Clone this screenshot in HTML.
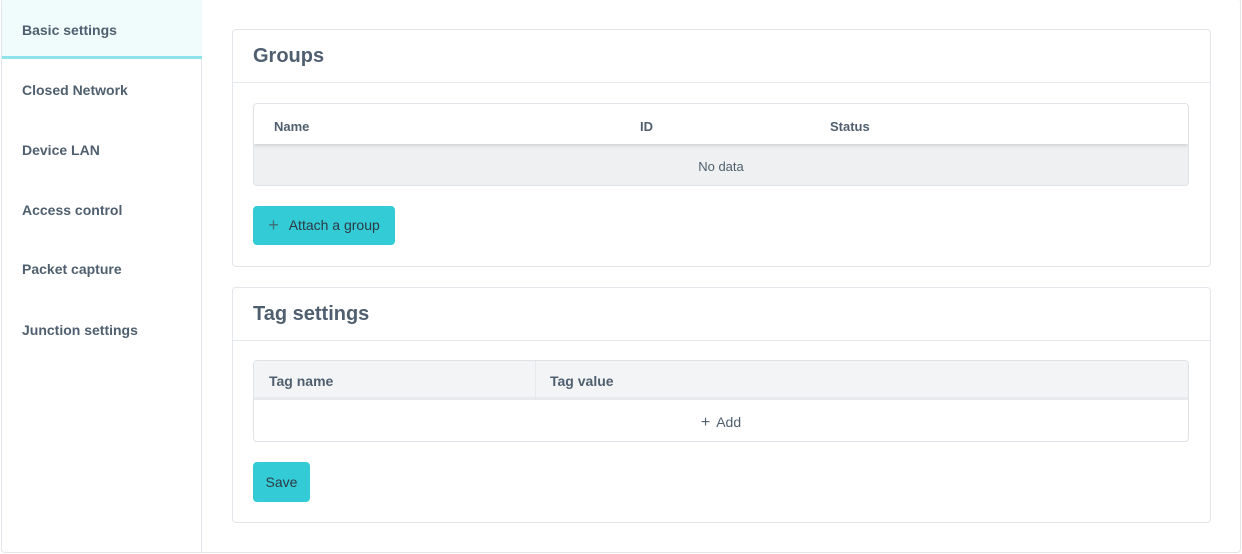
<!DOCTYPE html>
<html><head><style>
*{box-sizing:border-box;margin:0;padding:0}
body{width:1242px;height:554px;background:#fff;font-family:"Liberation Sans",sans-serif;color:#4f5f6f;position:relative;overflow:hidden}
.frame{position:absolute;left:1px;top:-2px;width:1240px;height:555px;border:1px solid #e3e6ea;border-radius:4px}
.side{position:absolute;left:1px;top:0;width:201px;height:553px;border-right:1px solid #e3e6ea}
.it{position:absolute;left:21px;font-size:14px;font-weight:bold;color:#4f5f6f}
.act{position:absolute;left:1px;top:0;width:200px;height:59px;background:#f0fbfc;border-bottom:3px solid #8ee4ea}
.card{position:absolute;left:232px;width:979px;border:1px solid #e3e6ea;border-radius:4px;background:#fff}
.card h2{font-size:20px;font-weight:bold;height:53px;line-height:53px;padding-left:20px;border-bottom:1px solid #e6e9ec;color:#4f5f6f}
.tbl{position:absolute;left:20px;width:936px;border:1px solid #dfe3e8;border-radius:4px;overflow:hidden}
.btn{position:absolute;left:20px;background:#33ccd6;border-radius:4px;color:#2d3a45;font-size:14px;text-align:center}
.th{position:absolute;font-size:13px;font-weight:bold;color:#4f5f6f}
</style></head><body>
<div class="frame"></div>
<div class="side">
<div class="act"></div>
<div class="it" style="top:22px">Basic settings</div>
<div class="it" style="top:82px">Closed Network</div>
<div class="it" style="top:142px">Device LAN</div>
<div class="it" style="top:202px">Access control</div>
<div class="it" style="top:261px">Packet capture</div>
<div class="it" style="top:322px">Junction settings</div>
</div>
<div class="card" style="top:29px;height:238px">
<h2>Groups</h2>
<div class="tbl" style="top:73px;height:83px;background:#eff0f2">
<div style="position:absolute;left:0;top:0;width:100%;height:40px;background:#fff;box-shadow:0 2px 3px rgba(0,0,0,.12)"></div>
<div class="th" style="left:20px;top:15px">Name</div>
<div class="th" style="left:386px;top:15px">ID</div>
<div class="th" style="left:576px;top:15px">Status</div>
<div style="position:absolute;left:0;width:100%;top:55px;text-align:center;font-size:13px;color:#4f5f6f">No data</div>
</div>
<div class="btn" style="top:176px;width:142px;height:39px;line-height:39px"><span style="color:#3d6d75;font-size:18px;margin-right:10px;vertical-align:-1px">+</span>Attach a group</div>
</div>
<div class="card" style="top:287px;height:236px">
<h2>Tag settings</h2>
<div class="tbl" style="top:72px;height:82px;background:#fff">
<div style="position:absolute;left:0;top:0;width:100%;height:39px;background:#f3f4f6;border-bottom:3px solid #e8eaee"></div>
<div style="position:absolute;left:281px;top:0;width:1px;height:39px;background:#e6e8eb"></div>
<div class="th" style="left:15px;top:12px;font-size:14px">Tag name</div>
<div class="th" style="left:296px;top:12px;font-size:14px">Tag value</div>
<div style="position:absolute;left:0;width:100%;top:53px;text-align:center;font-size:14px;color:#4f5f6f"><span style="font-size:16px;margin-right:6px">+</span>Add</div>
</div>
<div class="btn" style="top:174px;width:57px;height:40px;line-height:40px">Save</div>
</div>
</body></html>
